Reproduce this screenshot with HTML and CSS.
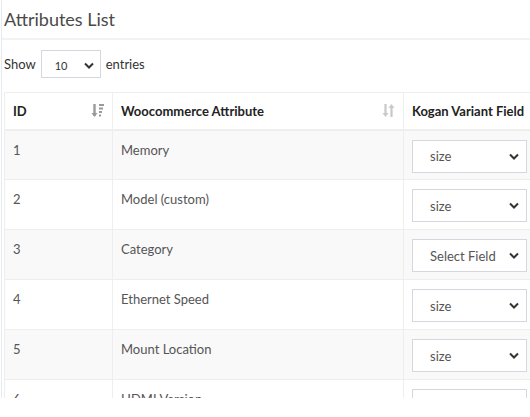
FILE: index.html
```html
<!DOCTYPE html>
<html>
<head>
<meta charset="utf-8">
<link rel="stylesheet" href="styles.css">
</head>
<body>
<div class="card">
  <div class="card-title">Attributes List</div>
  <div class="length">
    <span>Show</span>
    <div class="sel sel-small"><span>10</span>
      <svg width="10" height="7" viewBox="0 0 10 7"><path d="M1 1.5 L5 5.5 L9 1.5" fill="none" stroke="#333" stroke-width="2"/></svg>
    </div>
    <span>entries</span>
  </div>
  <div class="table-wrap">
    <table class="grid">
      <colgroup><col class="c1"><col class="c2"><col class="c3"></colgroup>
      <thead>
        <tr>
          <th><div class="th-in"><span>ID</span>
            <svg class="sort active" width="13" height="15" viewBox="0 0 13 15"><path d="M3.5 1 V13" stroke="currentColor" stroke-width="2.4"/><path d="M0.5 10 L3.5 14 L6.5 10 Z" fill="currentColor"/><path d="M8 2 H13 M8 5.5 H12 M8 9 H11 M8 12.5 H10" stroke="currentColor" stroke-width="1.8"/></svg>
          </div></th>
          <th><div class="th-in"><span>Woocommerce Attribute</span>
            <svg class="sort" width="13" height="15" viewBox="0 0 13 15"><path d="M3.5 1 V12" stroke="currentColor" stroke-width="2.2"/><path d="M0.5 10 L3.5 14 L6.5 10 Z" fill="currentColor"/><path d="M9.5 3 V14" stroke="currentColor" stroke-width="2.2"/><path d="M6.5 5 L9.5 1 L12.5 5 Z" fill="currentColor"/></svg>
          </div></th>
          <th><div class="th-in"><span>Kogan Variant Field</span></div></th>
        </tr>
      </thead>
      <tbody>
        <tr class="odd"><td>1</td><td>Memory</td><td><div class="sel"><span>size</span><svg width="10" height="7" viewBox="0 0 10 7"><path d="M1 1.5 L5 5.5 L9 1.5" fill="none" stroke="#333" stroke-width="2"/></svg></div></td></tr>
        <tr><td>2</td><td>Model (custom)</td><td><div class="sel"><span>size</span><svg width="10" height="7" viewBox="0 0 10 7"><path d="M1 1.5 L5 5.5 L9 1.5" fill="none" stroke="#333" stroke-width="2"/></svg></div></td></tr>
        <tr class="odd"><td>3</td><td>Category</td><td><div class="sel"><span>Select Field</span><svg width="10" height="7" viewBox="0 0 10 7"><path d="M1 1.5 L5 5.5 L9 1.5" fill="none" stroke="#333" stroke-width="2"/></svg></div></td></tr>
        <tr><td>4</td><td>Ethernet Speed</td><td><div class="sel"><span>size</span><svg width="10" height="7" viewBox="0 0 10 7"><path d="M1 1.5 L5 5.5 L9 1.5" fill="none" stroke="#333" stroke-width="2"/></svg></div></td></tr>
        <tr class="odd"><td>5</td><td>Mount Location</td><td><div class="sel"><span>size</span><svg width="10" height="7" viewBox="0 0 10 7"><path d="M1 1.5 L5 5.5 L9 1.5" fill="none" stroke="#333" stroke-width="2"/></svg></div></td></tr>
        <tr><td>6</td><td>HDMI Version</td><td><div class="sel"><span>size</span><svg width="10" height="7" viewBox="0 0 10 7"><path d="M1 1.5 L5 5.5 L9 1.5" fill="none" stroke="#333" stroke-width="2"/></svg></div></td></tr>
      </tbody>
    </table>
  </div>
</div>
</body>
</html>
```
FILE: styles.css
```css
html, body {
  margin: 0;
  padding: 0;
  background: #fff;
  overflow: hidden;
}
body {
  width: 530px;
  height: 417px;
  font-family: Lato, "Liberation Sans", sans-serif;
  font-size: 13px;
  color: #555;
}
.card {
  margin-left: 1px;
  border-left: 1px solid #e6ebf2;
  height: 398px;
  overflow: hidden;
}
.card-title {
  height: 40px;
  box-sizing: border-box;
  padding: 7px 0 0 2px;
  font-size: 18px;
  line-height: 24px;
  color: #4a4a4a;
  border-bottom: 2px solid #f3f3f3;
}
.length {
  display: flex;
  align-items: center;
  gap: 5px;
  padding: 10px 0 0 2px;
  height: 28px;
  color: #333;
}
.sel {
  display: flex;
  align-items: center;
  justify-content: space-between;
  box-sizing: border-box;
  background: #fff;
  border: 1px solid #d6d6de;
  color: #555;
}
.sel-small {
  width: 60px;
  height: 28px;
  padding: 2px 6px 0 13px;
  font-size: 11px;
  color: #333;
}
.table-wrap {
  margin-top: 14px;
  padding-left: 2px;
}
.grid {
  border-collapse: collapse;
  table-layout: fixed;
  width: 560px;
  border-left: 1px solid #eeeeee;
}
.c1 { width: 108px; }
.c2 { width: 291px; }
.c3 { width: 161px; }
.grid th {
  height: 37px;
  box-sizing: border-box;
  padding: 0 8px;
  text-align: left;
  font-weight: 700;
  color: #222;
  border-top: 1px solid #eeeeee;
  border-bottom: 2px solid #eeeeee;
  border-right: 1px solid #eeeeee;
  white-space: nowrap;
}
.th-in {
  display: flex;
  align-items: center;
  justify-content: space-between;
}
.sort { color: #c9c9c9; margin-right: 0; }
.sort.active { color: #9a9a9a; }
.grid tbody tr { height: 50px; }
.grid td {
  padding: 9px 8px 0;
  vertical-align: top;
  line-height: 20px;
  border-top: 1px solid #eeeeee;
  border-right: 1px solid #eeeeee;
}
.grid tr.odd td { background: #f9f9f9; }
.grid td .sel {
  width: 115px;
  height: 33px;
  padding: 0 7px 0 17px;
  font-size: 13px;
}
```
